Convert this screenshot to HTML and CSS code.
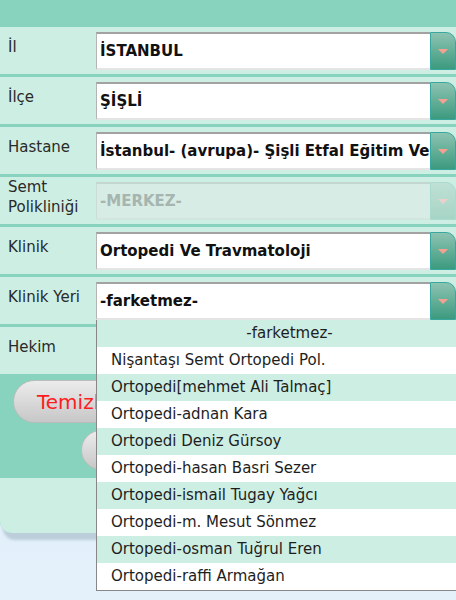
FILE: index.html
```html
<!DOCTYPE html>
<html>
<head>
    <link rel="stylesheet" href="styles.css">
</head>
<body>
    <div class="panel">
        <div class="panel-head"></div>

        <div class="row">
            <div class="label">İl</div>
            <div class="select">
                <div class="value">İSTANBUL</div>
                <div class="arrow"></div>
            </div>
        </div>
        <div class="row">
            <div class="label">İlçe</div>
            <div class="select">
                <div class="value">ŞİŞLİ</div>
                <div class="arrow"></div>
            </div>
        </div>
        <div class="row">
            <div class="label">Hastane</div>
            <div class="select">
                <div class="value">İstanbul- (avrupa)- Şişli Etfal Eğitim Ve</div>
                <div class="arrow"></div>
            </div>
        </div>
        <div class="row">
            <div class="label">Semt<br>Polikliniği</div>
            <div class="select disabled">
                <div class="value">-MERKEZ-</div>
                <div class="arrow"></div>
            </div>
        </div>
        <div class="row">
            <div class="label">Klinik</div>
            <div class="select">
                <div class="value">Ortopedi Ve Travmatoloji</div>
                <div class="arrow"></div>
            </div>
        </div>
        <div class="row">
            <div class="label">Klinik Yeri</div>
            <div class="select open">
                <div class="value">-farketmez-</div>
                <div class="arrow"></div>
                <div class="options">
                    <div class="option option-empty">-farketmez-</div>
                    <div class="option">Nişantaşı Semt Ortopedi Pol.</div>
                    <div class="option">Ortopedi[mehmet Ali Talmaç]</div>
                    <div class="option">Ortopedi-adnan Kara</div>
                    <div class="option">Ortopedi Deniz Gürsoy</div>
                    <div class="option">Ortopedi-hasan Basri Sezer</div>
                    <div class="option">Ortopedi-ismail Tugay Yağcı</div>
                    <div class="option">Ortopedi-m. Mesut Sönmez</div>
                    <div class="option">Ortopedi-osman Tuğrul Eren</div>
                    <div class="option">Ortopedi-raffi Armağan</div>
                </div>
            </div>
        </div>
        <div class="row">
            <div class="label">Hekim</div>
            <div class="select">
                <div class="value"></div>
                <div class="arrow"></div>
            </div>
        </div>

        <div class="buttons">
            <button class="btn btn-clear">Temizle</button>
            <button class="btn btn-search" aria-label="Randevu Ara"></button>
        </div>
        <div class="panel-foot"></div>
    </div>
</body>
</html>
```

FILE: styles.css
```css
body {
    margin: 0;
    height: 600px;
    overflow: hidden;
    background: linear-gradient(#d6e8f5, #e4f1fb);
    font-family: "DejaVu Sans", Verdana, sans-serif;
}
.panel {
    position: relative;
    background-color: #88d3bd;
    border-bottom-left-radius: 12px;
    box-shadow: 3px 7px 3px rgba(140, 165, 180, 0.45);
}
.panel-head {
    height: 27px;
}
.row {
    display: flex;
    height: 47px;
    margin-bottom: 3px;
    background-color: #cdeee3;
}
.label {
    flex-shrink: 0;
    width: 88px;
    padding: 0 0 7px 8px;
    display: flex;
    align-items: center;
    font-size: 15px;
    line-height: 20px;
    color: #2a2a2a;
}
.select {
    position: relative;
    flex: 1;
    min-width: 0;
    display: flex;
    height: 38px;
    margin-top: 5px;
}
.value {
    flex: 1;
    min-width: 0;
    display: flex;
    align-items: center;
    padding-left: 3px;
    background-color: #fff;
    border-top: 2px solid #a2a2a2;
    border-left: 1px solid #b4b4b4;
    border-bottom: 2px solid #e4e4e4;
    font-size: 15px;
    font-weight: bold;
    color: #111;
    white-space: nowrap;
    overflow: hidden;
}
.arrow {
    flex-shrink: 0;
    width: 24px;
    display: flex;
    align-items: center;
    justify-content: center;
    border: 1px solid #38a89f;
    border-top-right-radius: 10px;
    background: linear-gradient(#8cc3b1, #3c9a7e);
}
.arrow::after {
    content: "";
    border-left: 5px solid transparent;
    border-right: 5px solid transparent;
    border-top: 5px solid #f7a092;
}
.disabled .value {
    background-color: #d7ece5;
    border-top-color: #c3d6cf;
    border-left-color: #cbdcd6;
    border-bottom-color: #d2e6df;
    color: #a6b5af;
}
.disabled .arrow {
    border-color: #a9dacd;
    background: linear-gradient(#bfe0d5, #a6d5c5);
}
.disabled .arrow::after {
    border-top-color: #ecd0cb;
}
.options {
    position: absolute;
    top: 100%;
    left: 0;
    right: 0;
    z-index: 2;
    background-color: #fff;
    border-left: 1px solid #878787;
    border-bottom: 1px solid #878787;
}
.option {
    height: 27px;
    line-height: 27px;
    padding-left: 14px;
    font-size: 15px;
    color: #1e1e1e;
    white-space: nowrap;
    overflow: hidden;
}
.option:nth-child(odd) {
    background-color: #cdeee3;
}
.option-empty {
    padding-left: 26px;
    text-align: center;
}
.buttons {
    display: flex;
    flex-direction: column;
    align-items: flex-start;
    gap: 7px;
    padding: 3px 0 8px 13px;
}
.btn {
    height: 43px;
    padding: 0 23px;
    border: 1px solid #bcbcbc;
    border-radius: 22px;
    background: linear-gradient(#ececec, #c7c7c7);
    font-family: "DejaVu Sans", Verdana, sans-serif;
    font-size: 20px;
    color: #ff1c1c;
}
.btn-search {
    width: 160px;
    height: 40px;
    margin-left: 68px;
}
.panel-foot {
    height: 55px;
    background-color: #cdeee3;
    border-bottom-left-radius: 12px;
}
```
